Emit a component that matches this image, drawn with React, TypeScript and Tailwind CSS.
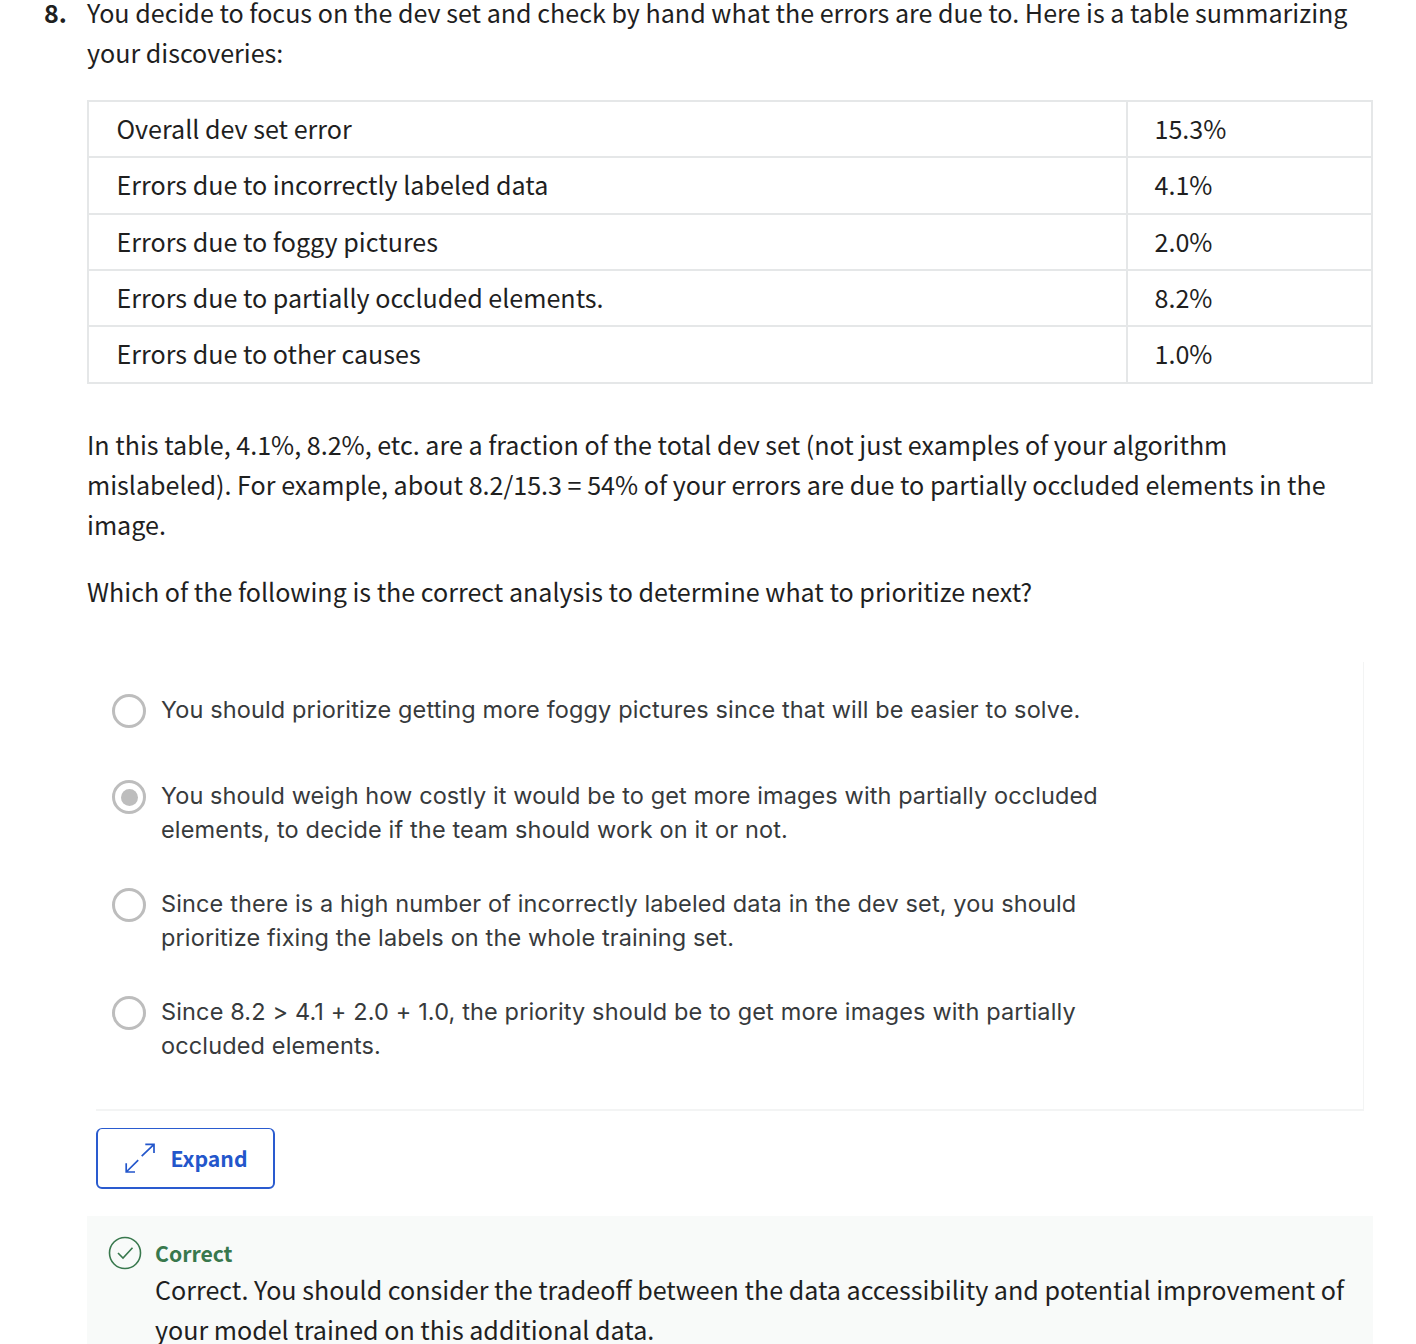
import React from "react";

const rows = [
  { label: "Overall dev set error", value: "15.3%", height: "h-[56px]" },
  { label: "Errors due to incorrectly labeled data", value: "4.1%", height: "h-[57px]" },
  { label: "Errors due to foggy pictures", value: "2.0%", height: "h-[56px]" },
  { label: "Errors due to partially occluded elements.", value: "8.2%", height: "h-[56px]" },
  { label: "Errors due to other causes", value: "1.0%", height: "h-[57px]" },
];

const options = [
  {
    lines: ["You should prioritize getting more foggy pictures since that will be easier to solve."],
    checked: false,
    tracking: "tracking-[0.125px]",
  },
  {
    lines: [
      "You should weigh how costly it would be to get more images with partially occluded",
      "elements, to decide if the team should work on it or not.",
    ],
    checked: true,
    tracking: "tracking-[0.09px] [&>*:last-child]:tracking-[0.15px]",
  },
  {
    lines: [
      "Since there is a high number of incorrectly labeled data in the dev set, you should",
      "prioritize fixing the labels on the whole training set.",
    ],
    checked: false,
    tracking: "tracking-[0.125px]",
  },
  {
    lines: [
      "Since 8.2 > 4.1 + 2.0 + 1.0, the priority should be to get more images with partially",
      "occluded elements.",
    ],
    checked: false,
    tracking: "tracking-[0.138px]",
  },
];

function Lines({ lines }: { lines: string[] }) {
  return (
    <>
      {lines.map((l) => (
        <span key={l} className="block whitespace-nowrap">
          {l}
        </span>
      ))}
    </>
  );
}

function Radio({ checked }: { checked: boolean }) {
  return (
    <span className="mt-px flex h-[34px] w-[34px] shrink-0 items-center justify-center rounded-full border-[3px] border-[#bdbdbd]">
      {checked && <span className="h-[17px] w-[17px] rounded-full bg-[#bdbdbd]" />}
    </span>
  );
}

export default function App() {
  return (
    <div className="h-[1344px] w-[1416px] overflow-hidden bg-white font-['Noto_Sans_CJK_SC',sans-serif] text-[25.08px] leading-[40px] text-[#1f1f1f]">
      <div className="-mt-[8px] flex">
        <div className="w-[87px] shrink-0 pl-[44px] font-bold">8.</div>
        <div className="w-[1286px] shrink-0">
          <p>
            <Lines
              lines={[
                "You decide to focus on the dev set and check by hand what the errors are due to. Here is a table summarizing",
                "your discoveries:",
              ]}
            />
          </p>

          <table className="mt-[28px] w-full table-fixed border-collapse border-2 border-[#e5e7e8]">
            <colgroup>
              <col className="w-[1039px]" />
              <col />
            </colgroup>
            <tbody>
              {rows.map(({ label, value, height }) => (
                <tr key={label} className={height}>
                  <td className="border-2 border-[#e5e7e8] pt-[6px] pb-0 pl-[27.5px] align-top">
                    <span className="block whitespace-nowrap">{label}</span>
                  </td>
                  <td className="border-2 border-[#e5e7e8] pt-[6px] pb-0 pl-[26.5px] align-top">
                    <span className="block">{value}</span>
                  </td>
                </tr>
              ))}
            </tbody>
          </table>

          <p className="mt-[40px]">
            <Lines
              lines={[
                "In this table, 4.1%, 8.2%, etc. are a fraction of the total dev set (not just examples of your algorithm",
                "mislabeled). For example, about 8.2/15.3 = 54% of your errors are due to partially occluded elements in the",
                "image.",
              ]}
            />
          </p>
          <p className="mt-[27px]">
            <Lines lines={["Which of the following is the correct analysis to determine what to prioritize next?"]} />
          </p>

          <div className="mt-[51px] ml-[9px] h-[449px] w-[1268px] border-r border-b-2 border-[#f3f4f4] pl-[16px] pt-[31px] font-['Inter',sans-serif] text-[23.5px] leading-[34px] text-[#373a3c]">
            <div className="flex flex-col gap-10">
              {options.map((o, i) => (
                <label key={i} className={i === 0 ? "mb-[11px] flex gap-[15px]" : "flex gap-[15px]"}>
                  <Radio checked={o.checked} />
                  <span className={o.tracking}>
                    <Lines lines={o.lines} />
                  </span>
                </label>
              ))}
            </div>
          </div>

          <button className="mt-[17px] ml-[9px] flex h-[61px] w-[179px] items-center rounded-[6px] border-2 border-t border-[#2a5bcf] pl-[26.5px] text-[21.2px] font-bold text-[#2356cb]">
            <svg width="32" height="32" viewBox="0 0 32 32" fill="none" stroke="currentColor" strokeWidth="1.7">
              <path d="M16.7 14.2 L29 2.4 M20.3 2.4 H29 V11 M13.2 18.2 L1.2 30 M1.2 21.3 V30 H10" />
            </svg>
            <span className="ml-[14px]">Expand</span>
          </button>

          <div className="mt-[27px] flex h-[140px] bg-[#f8faf9] pl-[21px] pt-[19px]">
            <svg className="mt-px shrink-0" width="34" height="34" viewBox="0 0 34 34" fill="none" stroke="#38784d" strokeWidth="1.6">
              <circle cx="17" cy="17" r="15.5" />
              <path d="M10 17 L15 22 L24.5 11.8" />
            </svg>
            <div className="ml-[13px]">
              <p className="text-[21.2px] leading-[35px] font-bold text-[#38784d]">Correct</p>
              <p className="-mt-px">
                <Lines
                  lines={[
                    "Correct. You should consider the tradeoff between the data accessibility and potential improvement of",
                    "your model trained on this additional data.",
                  ]}
                />
              </p>
            </div>
          </div>
        </div>
      </div>
    </div>
  );
}
